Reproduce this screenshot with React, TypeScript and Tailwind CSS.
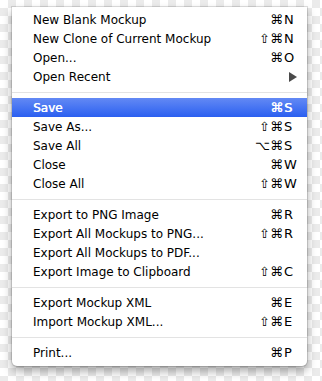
import React from "react";

type Item =
  | { sep: true }
  | { label: string; mods?: string; key?: string; arrow?: boolean; active?: boolean };

const items: Item[] = [
  { label: "New Blank Mockup", mods: "⌘", key: "N" },
  { label: "New Clone of Current Mockup", mods: "⇧⌘", key: "N" },
  { label: "Open...", mods: "⌘", key: "O" },
  { label: "Open Recent", arrow: true },
  { sep: true },
  { label: "Save", mods: "⌘", key: "S", active: true },
  { label: "Save As...", mods: "⇧⌘", key: "S" },
  { label: "Save All", mods: "⌥⌘", key: "S" },
  { label: "Close", mods: "⌘", key: "W" },
  { label: "Close All", mods: "⇧⌘", key: "W" },
  { sep: true },
  { label: "Export to PNG Image", mods: "⌘", key: "R" },
  { label: "Export All Mockups to PNG...", mods: "⇧⌘", key: "R" },
  { label: "Export All Mockups to PDF..." },
  { label: "Export Image to Clipboard", mods: "⇧⌘", key: "C" },
  { sep: true },
  { label: "Export Mockup XML", mods: "⌘", key: "E" },
  { label: "Import Mockup XML...", mods: "⇧⌘", key: "E" },
  { sep: true },
  { label: "Print...", mods: "⌘", key: "P" },
];

export default function App() {
  return (
    <div
      className="w-[322px] h-[381px] bg-[repeating-conic-gradient(#ebebeb_0%_25%,#ffffff_0%_50%)] bg-[length:16px_16px] pt-[7px] pl-[12px]"
      style={{ fontFamily: '"DejaVu Sans", "Liberation Sans", sans-serif' }}
    >
      <div className="w-[295px] bg-white rounded-b-[5px] pt-[3px] pb-[4px] shadow-[0_5px_10px_rgba(0,0,0,0.35),0_0_0_1px_rgba(0,0,0,0.12)] text-[12px] text-black">
        {items.map((it, i) =>
          "sep" in it ? (
            <div key={i} className="h-[12px] flex items-center">
              <div className="h-px w-full bg-[#e3e3e3]" />
            </div>
          ) : (
            <div
              key={i}
              className={`h-[19px] flex items-center pl-[21px] pr-[10px] leading-none ${
                it.active
                  ? "bg-gradient-to-b from-[#6389f4] to-[#2a5ef0] text-white [text-shadow:0.5px_0_0_#fff]"
                  : ""
              }`}
            >
              <span className="flex-1 whitespace-nowrap">{it.label}</span>
              {it.arrow ? (
                <span className="w-[14px] flex justify-end">
                  <svg width="8" height="10" viewBox="0 0 8 10">
                    <path d="M0 0 L8 5 L0 10 Z" fill="#4a4a4a" />
                  </svg>
                </span>
              ) : (
                <>
                  <span className="text-right whitespace-nowrap text-[13px]">{it.mods ?? ""}</span>
                  <span className="w-[14px] pl-[1px] text-[13px]">{it.key ?? ""}</span>
                </>
              )}
            </div>
          )
        )}
      </div>
    </div>
  );
}
